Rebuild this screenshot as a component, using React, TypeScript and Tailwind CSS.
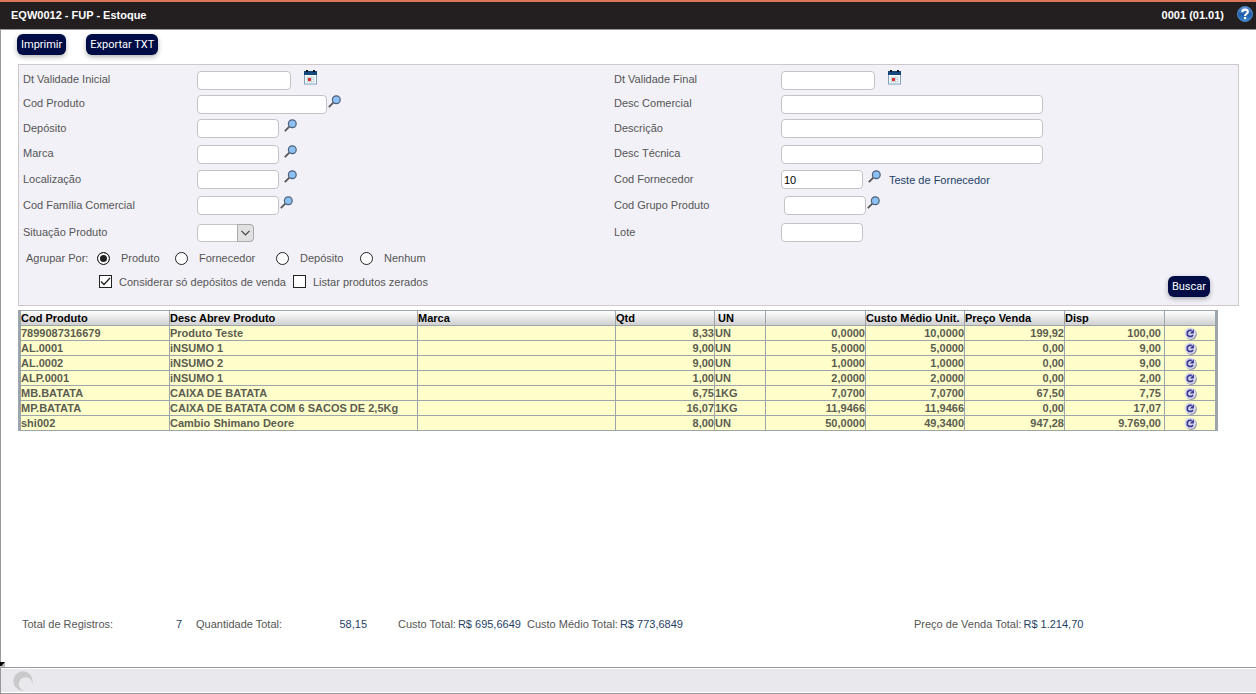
import { useState } from "react"
import type { ReactNode } from "react"

interface Product {
  code: string
  desc: string
  brand: string
  qty: string
  unit: string
  cost: string
  avgCost: string
  price: string
  available: string
}

const PRODUCTS: Product[] = [
  { code: "7899087316679", desc: "Produto Teste", brand: "", qty: "8,33", unit: "UN", cost: "0,0000", avgCost: "10,0000", price: "199,92", available: "100,00" },
  { code: "AL.0001", desc: "iNSUMO 1", brand: "", qty: "9,00", unit: "UN", cost: "5,0000", avgCost: "5,0000", price: "0,00", available: "9,00" },
  { code: "AL.0002", desc: "iNSUMO 2", brand: "", qty: "9,00", unit: "UN", cost: "1,0000", avgCost: "1,0000", price: "0,00", available: "9,00" },
  { code: "ALP.0001", desc: "iNSUMO 1", brand: "", qty: "1,00", unit: "UN", cost: "2,0000", avgCost: "2,0000", price: "0,00", available: "2,00" },
  { code: "MB.BATATA", desc: "CAIXA DE BATATA", brand: "", qty: "6,75", unit: "1KG", cost: "7,0700", avgCost: "7,0700", price: "67,50", available: "7,75" },
  { code: "MP.BATATA", desc: "CAIXA DE BATATA COM 6 SACOS DE 2,5Kg", brand: "", qty: "16,07", unit: "1KG", cost: "11,9466", avgCost: "11,9466", price: "0,00", available: "17,07" },
  { code: "shi002", desc: "Cambio Shimano Deore", brand: "", qty: "8,00", unit: "UN", cost: "50,0000", avgCost: "49,3400", price: "947,28", available: "9.769,00" },
]

const GROUPS = [
  { value: "Produto", width: "w-[78px]" },
  { value: "Fornecedor", width: "w-[101px]" },
  { value: "Depósito", width: "w-[84px]" },
  { value: "Nenhum", width: "w-[84px]" },
]

function CalendarIcon() {
  return (
    <svg width="13" height="15" viewBox="0 0 13 15">
      <rect x="0.5" y="2.5" width="12" height="11.500" fill="#fff" stroke="#7ba0bd" />
      <rect x="0" y="1" width="13" height="4" fill="#14487c" />
      <rect x="2" y="0" width="2" height="2" fill="#111" />
      <rect x="9" y="0" width="2" height="2" fill="#111" />
      <path d="M2 7.500h9M2 9.500h9M2 11.500h9M3.500 6v7M5.500 6v7M7.500 6v7M9.500 6v7" stroke="#bccfdd" strokeWidth="0.7" />
      <rect x="4" y="8" width="3" height="3" fill="#d6322b" />
    </svg>
  )
}

function SearchIcon() {
  return (
    <svg width="13" height="13" viewBox="0 0 13 13">
      <path d="M0.800 12.200L5.300 7.700" stroke="#555" strokeWidth="1.800" />
      <circle cx="8.300" cy="4.700" r="3.900" fill="#8dc0f5" stroke="#4d6178" strokeWidth="1.200" />
    </svg>
  )
}

function HelpIcon() {
  return (
    <svg width="16" height="16" viewBox="0 0 16 16">
      <defs>
        <linearGradient id="help" x1="0" y1="0" x2="0" y2="1">
          <stop offset="0" stopColor="#6f9fd4" />
          <stop offset="0.5" stopColor="#1f5ca8" />
          <stop offset="1" stopColor="#3b86d0" />
        </linearGradient>
      </defs>
      <circle cx="8" cy="8" r="7.500" fill="url(#help)" stroke="#4a86c4" />
      <path d="M5.300 6.200C5.300 2.800 10.800 2.800 10.800 5.900C10.800 7.800 8.100 7.700 8.100 9.900" stroke="#fff" strokeWidth="2.100" fill="none" />
      <rect x="7" y="11" width="2.200" height="2.200" fill="#fff" />
    </svg>
  )
}

function ReloadIcon() {
  return (
    <svg width="13" height="13" viewBox="0 0 13 13">
      <circle cx="7.200" cy="7.200" r="5.700" fill="#9a9aae" />
      <circle cx="6.200" cy="6.200" r="5.700" fill="#d9d9ea" />
      <path d="M7.800 3.400H5.200L3.400 5V8L5 9.300H7.700L9 8" stroke="#3a3a94" strokeWidth="1.700" fill="none" />
      <path d="M9.900 2v4.500H5.800z" fill="#3a3a94" />
    </svg>
  )
}

interface ActionButtonProps {
  children: ReactNode
}

function ActionButton({ children }: ActionButtonProps) {
  return (
    <button
      type="button"
      className="h-[21px] px-1 rounded-md bg-[#000c45] text-white text-[11px] leading-4 font-[Roboto,'Noto_Sans',sans-serif] shadow-[0_2px_5px_rgba(0,0,0,0.3)]"
    >
      {children}
    </button>
  )
}

interface FieldProps {
  id: string
  label: string
  width: string
  value?: string
  icon?: "calendar" | "search"
  iconGap?: string
  indent?: string
  children?: ReactNode
}

function Field({ id, label, width, value = "", icon, iconGap = "ml-[5px]", indent = "", children }: FieldProps) {
  return (
    <>
      <label htmlFor={id} className="pb-0.5">
        {label}
      </label>
      <div className={`flex items-center ${indent}`}>
        <input
          id={id}
          type="text"
          defaultValue={value}
          className={`${width} h-[19px] px-0.5 rounded border border-[#c4c4c8] bg-white text-black text-[11px] outline-none`}
        />
        {icon && (
          <button type="button" aria-label={`Selecionar ${label}`} className={`${iconGap} mb-1.5`}>
            {icon === "calendar" ? <CalendarIcon /> : <SearchIcon />}
          </button>
        )}
        {children}
      </div>
    </>
  )
}

function StatusSelect() {
  return (
    <>
      <label htmlFor="situacao" className="pb-0.5">
        Situação Produto
      </label>
      <div>
        <div className="relative w-[57px] h-[18px]">
          <select id="situacao" className="appearance-none block w-full h-full rounded border border-[#c4c4c8] bg-white outline-none">
            <option value=""></option>
            <option value="A">Ativo</option>
            <option value="I">Inativo</option>
          </select>
          <span className="absolute right-0 top-0 flex items-center justify-center w-[17px] h-full border border-[#a9a9ad] rounded-r bg-[#e1e1e1] pointer-events-none">
            <svg width="9" height="6" viewBox="0 0 9 6">
              <path d="M0.500 0.800L4.500 4.800L8.500 0.800" stroke="#444" strokeWidth="1.200" fill="none" />
            </svg>
          </span>
        </div>
      </div>
    </>
  )
}

interface CheckProps {
  label: string
  initial?: boolean
}

function Check({ label, initial = false }: CheckProps) {
  const [checked, setChecked] = useState(initial)
  return (
    <label className="flex items-center gap-[7px] w-[194px] whitespace-nowrap">
      <span className="grid place-items-center">
        <input
          type="checkbox"
          checked={checked}
          onChange={(e) => setChecked(e.target.checked)}
          className="appearance-none col-start-1 row-start-1 w-[13px] h-[13px] border border-[#222] bg-white"
        />
        {checked && (
          <svg width="11" height="9" viewBox="0 0 11 9" className="col-start-1 row-start-1 pointer-events-none">
            <path d="M1 4.500L4 7.500L10 1" stroke="#222" strokeWidth="1.300" fill="none" />
          </svg>
        )}
      </span>
      {label}
    </label>
  )
}

function SearchForm() {
  const [group, setGroup] = useState("Produto")
  return (
    <form className="mt-[9px] ml-[17px] mr-[17px] pt-[3px] pb-2 pl-1 border border-[#cfc8cb] bg-[#f2f1f8]">
      <div className="grid grid-cols-[174px_417px_167px_1fr] grid-rows-[24px_24px_25px_26px_25px_27px_27px] items-center">
        <Field id="dt-inicial" label="Dt Validade Inicial" width="w-[94px]" icon="calendar" iconGap="ml-[13px]" />
        <Field id="dt-final" label="Dt Validade Final" width="w-[94px]" icon="calendar" iconGap="ml-[13px]" />
        <Field id="cod-produto" label="Cod Produto" width="w-[130px]" icon="search" iconGap="ml-px" />
        <Field id="desc-comercial" label="Desc Comercial" width="w-[262px]" />
        <Field id="deposito" label="Depósito" width="w-[82px]" icon="search" />
        <Field id="descricao" label="Descrição" width="w-[262px]" />
        <Field id="marca" label="Marca" width="w-[82px]" icon="search" />
        <Field id="desc-tecnica" label="Desc Técnica" width="w-[262px]" />
        <Field id="localizacao" label="Localização" width="w-[82px]" icon="search" />
        <Field id="fornecedor" label="Cod Fornecedor" width="w-[82px]" value="10" icon="search">
          <span className="ml-2 text-[#1f3f66]">Teste de Fornecedor</span>
        </Field>
        <Field id="familia" label="Cod Família Comercial" width="w-[82px]" icon="search" iconGap="ml-px" />
        <Field id="grupo" label="Cod Grupo Produto" width="w-[82px]" icon="search" iconGap="ml-px" indent="pl-[3px]" />
        <StatusSelect />
        <Field id="lote" label="Lote" width="w-[82px]" />
      </div>
      <div className="flex items-end justify-between pr-7">
        <div className="pb-1">
          <fieldset className="flex items-center h-6 pl-[3px]">
            <legend className="float-left w-[71px]">Agrupar Por:</legend>
            {GROUPS.map((g) => (
              <label key={g.value} className={`flex items-center gap-[11px] ${g.width}`}>
                <input
                  type="radio"
                  name="group"
                  value={g.value}
                  checked={group === g.value}
                  onChange={() => setGroup(g.value)}
                  className="appearance-none w-[13px] h-[13px] rounded-full border border-[#222] bg-white checked:bg-[#222] checked:shadow-[inset_0_0_0_2px_white]"
                />
                {g.value}
              </label>
            ))}
          </fieldset>
          <div className="flex items-center h-[23px] pl-[76px]">
            <Check label="Considerar só depósitos de venda" initial />
            <Check label="Listar produtos zerados" />
          </div>
        </div>
        <ActionButton>Buscar</ActionButton>
      </div>
    </form>
  )
}

function ProductTable() {
  const th = "h-[15px] p-0 border-b border-r border-[#9ba5ab] whitespace-nowrap text-left font-bold"
  const td = "h-[15px] p-0 border-b border-r border-[#9ba5ab] whitespace-nowrap"
  return (
    <div className="mt-1 ml-[17px] mr-[38px]">
      <table className="w-full table-fixed border-separate border-spacing-0 border-t border-x-3 border-[#9ba5ab] font-bold leading-[14px]">
        <colgroup>
          <col className="w-[149px]" />
          <col className="w-[248px]" />
          <col className="w-[198px]" />
          <col className="w-[99px]" />
          <col className="w-[51px]" />
          <col className="w-[100px]" />
          <col className="w-[99px]" />
          <col className="w-[100px]" />
          <col className="w-[100px]" />
          <col className="w-[50px]" />
        </colgroup>
        <thead className="text-black">
          <tr className="bg-linear-to-b from-white to-[#cdcdcd]">
            <th className={th}>Cod Produto</th>
            <th className={th}>Desc Abrev Produto</th>
            <th className={th}>Marca</th>
            <th className={th}>Qtd</th>
            <th className={`${th} pl-[3px]`}>UN</th>
            <th className={th}></th>
            <th className={th}>Custo Médio Unit.</th>
            <th className={th}>Preço Venda</th>
            <th className={th}>Disp</th>
            <th className="h-[15px] p-0 border-b border-[#9ba5ab]"></th>
          </tr>
        </thead>
        <tbody className="bg-[#ffffcc] text-[#5c5c50]">
          {PRODUCTS.map((p) => (
            <tr key={p.code}>
              <td className={td}>{p.code}</td>
              <td className={td}>{p.desc}</td>
              <td className={td}>{p.brand}</td>
              <td className={`${td} text-right`}>{p.qty}</td>
              <td className={td}>{p.unit}</td>
              <td className={`${td} text-right`}>{p.cost}</td>
              <td className={`${td} text-right`}>{p.avgCost}</td>
              <td className={`${td} text-right`}>{p.price}</td>
              <td className={`${td} text-right pr-[3px]`}>{p.available}</td>
              <td className="h-[15px] p-0 border-b border-[#9ba5ab]">
                <button type="button" aria-label={`Atualizar ${p.code}`} className="block mx-auto">
                  <ReloadIcon />
                </button>
              </td>
            </tr>
          ))}
        </tbody>
      </table>
    </div>
  )
}

function Totals() {
  const value = "text-[#1f3f66]"
  return (
    <div className="mt-auto pt-6 pb-[35px] pl-[21px] grid grid-cols-[174px_202px_129px_387px_1fr] leading-4 whitespace-nowrap">
      <div className="flex justify-between w-40">
        Total de Registros: <span className={value}>7</span>
      </div>
      <div className="flex justify-between w-[171px]">
        Quantidade Total: <span className={value}>58,15</span>
      </div>
      <div className="flex gap-0.5">
        Custo Total: <span className={value}>R$ 695,6649</span>
      </div>
      <div className="flex gap-0.5">
        Custo Médio Total: <span className={value}>R$ 773,6849</span>
      </div>
      <div className="flex gap-0.5">
        Preço de Venda Total: <span className={value}>R$ 1.214,70</span>
      </div>
    </div>
  )
}

export default function App() {
  return (
    <div className="min-h-screen flex flex-col bg-white text-[#555] text-[11px] leading-4 font-['Liberation_Sans',Arial,sans-serif]">
      <header className="flex items-center justify-between h-[30px] pl-[11px] pr-[3px] pb-0.5 border-t-2 border-t-[#d9775a] border-b border-b-[#999] bg-[#231f20] text-white font-bold">
        <h1>EQW0012 - FUP - Estoque</h1>
        <div className="flex items-center gap-[13px]">
          <span>0001 (01.01)</span>
          <button type="button" aria-label="Ajuda" className="mb-0.5">
            <HelpIcon />
          </button>
        </div>
      </header>
      <main className="flex-1 flex flex-col border-l border-[#999]">
        <div className="flex gap-5 pt-1 pl-4">
          <ActionButton>Imprimir</ActionButton>
          <ActionButton>Exportar TXT</ActionButton>
        </div>
        <SearchForm />
        <ProductTable />
        <Totals />
      </main>
      <footer className="relative h-[27px] py-px border-y border-l border-[#999]">
        <svg width="5" height="5" viewBox="0 0 5 5" className="absolute -top-1.5 -left-px">
          <rect width="5" height="5" fill="#bbb" />
          <path d="M0 0h5L1.500 4H0z" fill="#000" />
        </svg>
        <div className="flex items-center h-full pl-3 bg-[#e8e8ed]">
          <svg width="20" height="20" viewBox="0 0 20 20">
            <circle cx="10" cy="10" r="9.700" fill="#c9c9cc" />
            <circle cx="12.500" cy="13" r="6.800" fill="#e8e8ed" />
          </svg>
        </div>
      </footer>
    </div>
  )
}
